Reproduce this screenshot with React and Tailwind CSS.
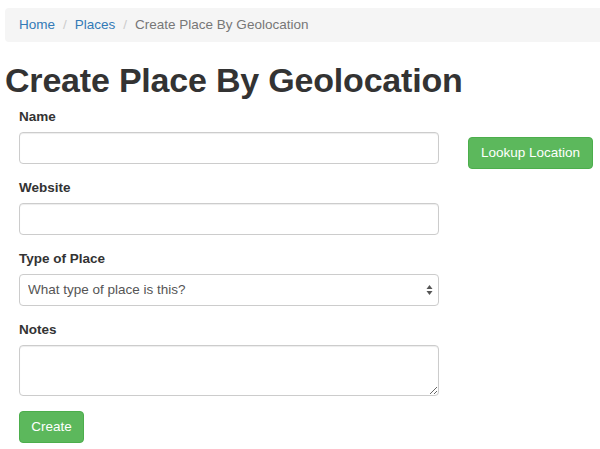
export default function App() {
  return (
    <div className="min-h-[449px] bg-white text-[#333] font-['Liberation_Sans',Arial,sans-serif] text-[13.5px]">
      <div className="pl-[5px] pt-2">
        <ol className="flex items-center h-[34px] bg-[#f5f5f5] rounded-l px-[14px] text-[13.5px]">
          <li><a href="#" className="text-[#337ab7]">Home</a></li>
          <li className="px-[8px] text-[#ccc]">/</li>
          <li><a href="#" className="text-[#337ab7]">Places</a></li>
          <li className="px-[8px] text-[#ccc]">/</li>
          <li className="text-[#777]">Create Place By Geolocation</li>
        </ol>
        <h1 className="mt-[18px] text-[34px] leading-[40px] font-bold text-[#333] tracking-[-0.2px]">
          Create Place By Geolocation
        </h1>
      </div>
      <div className="flex pl-[19px] pt-[7px]">
        <form className="w-[420px]" onSubmit={(e) => e.preventDefault()}>
          <Field label="Name">
            <input type="text" className="block w-full h-[32px] border border-[#ccc] rounded px-3 shadow-[inset_0_1px_1px_rgba(0,0,0,0.075)]" />
          </Field>
          <Field label="Website">
            <input type="text" className="block w-full h-[32px] border border-[#ccc] rounded px-3 shadow-[inset_0_1px_1px_rgba(0,0,0,0.075)]" />
          </Field>
          <Field label="Type of Place">
            <div className="relative">
              <select className="block w-full h-[32px] border border-[#ccc] rounded pl-[8px] pr-6 appearance-none bg-white text-[#555] text-[13.5px]">
                <option>What type of place is this?</option>
              </select>
              <svg className="absolute right-[6px] top-[10px] pointer-events-none" width="7" height="12" viewBox="0 0 7 12">
                <path d="M0.5 5 L3.5 1 L6.5 5 Z" fill="#555" />
                <path d="M0.5 7 L3.5 11 L6.5 7 Z" fill="#555" />
              </svg>
            </div>
          </Field>
          <Field label="Notes">
            <textarea className="block w-full h-[51px] border border-[#ccc] rounded px-3 py-1 shadow-[inset_0_1px_1px_rgba(0,0,0,0.075)]" />
          </Field>
          <button type="submit" className="h-[32px] w-[65px] mt-[1px] bg-[#5cb85c] border border-[#4cae4c] rounded text-white text-[13.5px]">
            Create
          </button>
        </form>
        <div className="pl-[29px] pt-[30px]">
          <button type="button" className="h-[32px] w-[125px] bg-[#5cb85c] border border-[#4cae4c] rounded text-white text-[13.5px]">
            Lookup Location
          </button>
        </div>
      </div>
    </div>
  );
}

function Field({ label, children }) {
  return (
    <div className="mb-[14px]">
      <label className="block h-[20px] leading-[20px] mb-[5px] font-bold text-[13.5px] text-[#333]">{label}</label>
      {children}
    </div>
  );
}
